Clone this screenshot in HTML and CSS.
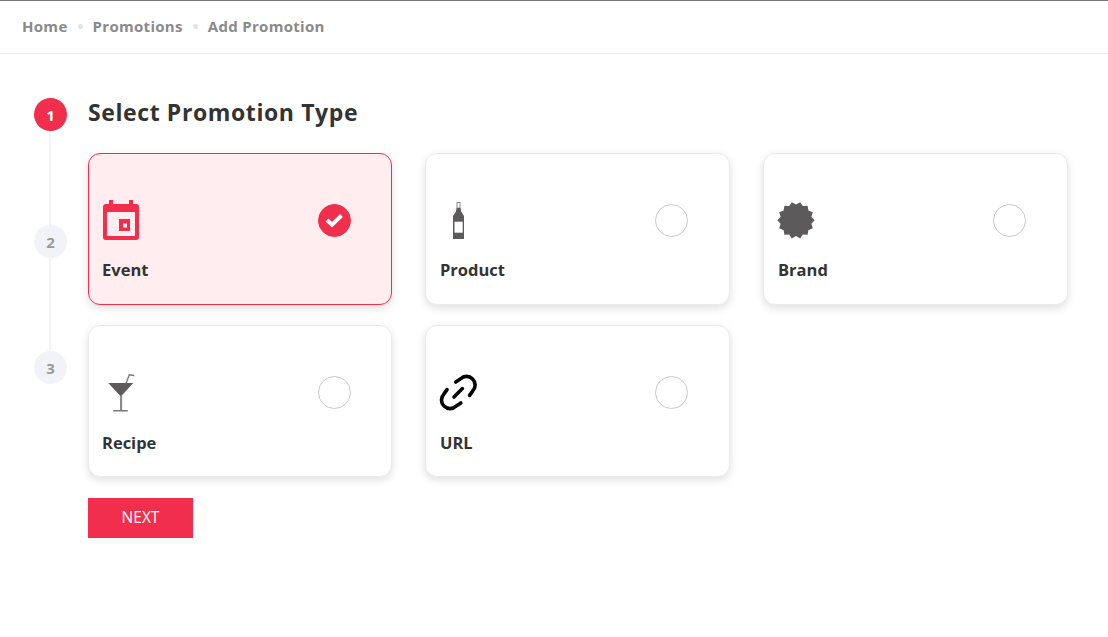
FILE: index.html
```html
<!DOCTYPE html>
<html lang="en">
<head>
  <meta charset="UTF-8" />
  <meta name="viewport" content="width=device-width, initial-scale=1.0" />
  <title>Add Promotion</title>
  <link rel="stylesheet" href="styles.css">
</head>
<body>
  <nav class="crumbs">
    <a>Home</a>
    <span class="dot"></span>
    <a>Promotions</a>
    <span class="dot"></span>
    <a>Add Promotion</a>
  </nav>

  <main class="wizard">
    <div class="steps">
      <div class="step step-active">1</div>
      <div class="step-line"></div>
      <div class="step">2</div>
      <div class="step-line step-line-short"></div>
      <div class="step">3</div>
    </div>

    <div class="content">
      <h2 class="title">Select Promotion Type</h2>

      <div class="types">
        <div class="type type-selected">
          <div class="type-top">
            <svg class="icon" width="38" height="42" viewBox="0 0 38 42">
              <path fill="#f12e4b" d="M7 1h4v4h16V1h4v4h3a3 3 0 0 1 3 3v30a3 3 0 0 1-3 3H4a3 3 0 0 1-3-3V8a3 3 0 0 1 3-3h3z"/>
              <rect x="5" y="13" width="28" height="24" fill="#ffedf0"/>
              <rect x="17" y="20" width="11" height="12" fill="#f12e4b"/>
              <rect x="21" y="24.500" width="4" height="4" fill="#ffedf0"/>
            </svg>
            <span class="radio radio-on">
              <svg width="19" height="15" viewBox="0 0 19 15">
                <path d="M2 7l5 4.800L16.500 2.500" fill="none" stroke="#fff" stroke-width="4"/>
              </svg>
            </span>
          </div>
          <div class="type-name">Event</div>
        </div>

        <div class="type">
          <div class="type-top">
            <svg class="icon" width="38" height="42" viewBox="0 0 38 42">
              <rect x="18" y="3.500" width="3" height="5.500" fill="#fff" stroke="#8a8888"/>
              <path fill="#5d5a5b" d="M17.700 9h3.700l1 4 2.600 4v23H14V17l2.700-4z"/>
              <rect x="15.500" y="22.700" width="8.200" height="11" fill="#fff"/>
            </svg>
            <span class="radio"></span>
          </div>
          <div class="type-name">Product</div>
        </div>

        <div class="type">
          <div class="type-top">
            <svg class="icon" width="38" height="42" viewBox="0 0 38 42">
              <polygon fill="#5d5a5b" points="19,5.500 23.140,3.170 25.860,7.060 30.600,6.760 31.350,11.450 35.760,13.230 34.400,17.780 37.600,21.300 34.400,24.820 35.760,29.370 31.350,31.150 30.600,35.840 25.860,35.540 23.140,39.430 19,37.100 14.860,39.430 12.140,35.540 7.400,35.840 6.650,31.150 2.240,29.370 3.600,24.820 .4,21.300 3.600,17.780 2.240,13.230 6.650,11.450 7.400,6.760 12.140,7.060 14.860,3.170"/>
            </svg>
            <span class="radio"></span>
          </div>
          <div class="type-name">Brand</div>
        </div>

        <div class="type">
          <div class="type-top">
            <svg class="icon" width="38" height="42" viewBox="0 0 38 42">
              <path fill="#5d5a5b" d="M6.300 12h25L18.800 25.500z"/>
              <rect x="18" y="25" width="2.200" height="14.500" fill="#8c8a8a"/>
              <rect x="11" y="39" width="15" height="1.500" rx=".7" fill="#7a7878"/>
              <path d="M24 12.500l3.300-8.700 5 .7" fill="none" stroke="#77757a" stroke-width="1.300"/>
            </svg>
            <span class="radio"></span>
          </div>
          <div class="type-name">Recipe</div>
        </div>

        <div class="type">
          <div class="type-top">
            <svg class="icon" width="38" height="42" viewBox="0 0 38 42">
              <path d="M16.800 11L21.400 7.900A8.600 8.600 0 0 1 33.600 20.100L30.600 24.400" fill="none" stroke="#000" stroke-width="3.600" stroke-linecap="round"/>
              <path d="M21.800 32L17.200 35.100A8.600 8.600 0 0 1 5 22.900L8 18.600" fill="none" stroke="#000" stroke-width="3.600" stroke-linecap="round"/>
              <path d="M15 26l8.400-8.400" fill="none" stroke="#000" stroke-width="3.600" stroke-linecap="round"/>
            </svg>
            <span class="radio"></span>
          </div>
          <div class="type-name">URL</div>
        </div>
      </div>

      <button class="next">NEXT</button>
    </div>
  </main>
</body>
</html>
```

FILE: styles.css
```css
* {
  box-sizing: border-box;
}
body {
  margin: 0;
  font-family: "Open Sans", sans-serif;
  background: #fff;
  color: #333;
}
.crumbs {
  display: flex;
  align-items: center;
  gap: 10px;
  height: 54px;
  padding: 0 22px 2px;
  border-top: 1px solid #777;
  border-bottom: 1px solid #e9e9e9;
  font-size: 15px;
  letter-spacing: .3px;
  font-weight: 700;
  color: #8a8a8a;
}
.dot {
  width: 5px;
  height: 5px;
  margin-top: 1px;
  border-radius: 50%;
  background: #e2e2e2;
}
.wizard {
  display: flex;
  padding: 44px 40px 0 34px;
  gap: 21px;
}
.steps {
  display: flex;
  flex-direction: column;
  align-items: center;
  width: 33px;
}
.step {
  flex: none;
  display: flex;
  align-items: center;
  justify-content: center;
  width: 33px;
  height: 33px;
  border-radius: 50%;
  background: #f2f3f8;
  color: #999;
  font-size: 15px;
  font-weight: 700;
}
.step-active {
  background: #f12e4b;
  color: #fff;
}
.step-line {
  width: 2px;
  height: 94px;
  margin-right: 1px;
  background: #f2f3f8;
}
.step-line-short {
  height: 93px;
}
.content {
  flex: 1;
}
.title {
  margin: 0 0 23px;
  height: 32px;
  font-size: 23px;
  line-height: 28px;
  font-weight: 700;
  letter-spacing: .6px;
  color: #333;
}
.types {
  display: grid;
  grid-template-columns: 304px 305px 305px;
  column-gap: 33px;
  row-gap: 20.400px;
}
.type {
  height: 152px;
  padding: 45px 40px 0 13px;
  background: #fff;
  border: 1px solid #ebebeb;
  border-radius: 12px;
  box-shadow: 0 3px 8px rgba(0, 0, 0, .13);
}
.type:not(:nth-child(3n+1)) {
  padding-left: 14px;
  padding-right: 41px;
}
.type:not(:nth-child(3n+1)) .icon {
  margin-left: -1px;
}
.type-selected {
  background: #ffedf0;
  border-color: #f12e4b;
}
.type-top {
  display: flex;
  align-items: center;
  justify-content: space-between;
  height: 42px;
  margin-bottom: 18.300px;
}
.radio {
  display: flex;
  align-items: center;
  justify-content: center;
  width: 33px;
  height: 33px;
  border: 1px solid #c9c9c9;
  border-radius: 50%;
}
.radio-on {
  background: #f12e4b;
  border-color: #f12e4b;
}
.type-name {
  font-size: 16.500px;
  line-height: 22px;
  font-weight: 700;
}
.next {
  display: block;
  width: 105px;
  height: 40px;
  margin-top: 20.600px;
  padding: 0 0 2px;
  border: 0;
  background: #f12e4b;
  color: #fff;
  font-family: inherit;
  font-size: 15.500px;
}
```
